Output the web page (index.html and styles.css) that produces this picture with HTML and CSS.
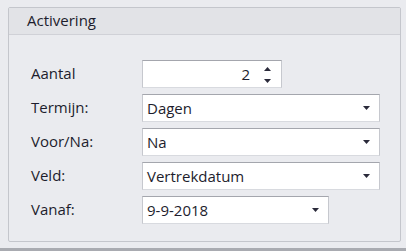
FILE: index.html
```html
<!DOCTYPE html>
<html lang="nl">
<head>
    <meta charset="UTF-8">
    <meta name="viewport" content="width=device-width, initial-scale=1.0">
    <title>Activering</title>
    <link rel="stylesheet" href="styles.css">
</head>
<body>
    <div class="group">
        <div class="group-header">Activering</div>
        <div class="group-body">
            <div class="row">
                <label class="label">Aantal</label>
                <div class="field spin">
                    <span class="value">2</span>
                    <span class="spin-buttons">
                        <svg width="7" height="4" viewBox="0 0 7 4"><path d="M0 4 L3.5 0 L7 4 Z" fill="#2a2a3a"/></svg>
                        <svg width="7" height="4" viewBox="0 0 7 4"><path d="M0 0 L7 0 L3.5 4 Z" fill="#2a2a3a"/></svg>
                    </span>
                </div>
            </div>
            <div class="row">
                <label class="label">Termijn:</label>
                <div class="field combo">
                    <span class="value">Dagen</span>
                    <svg class="arrow" width="7" height="4" viewBox="0 0 7 4"><path d="M0 0 L7 0 L3.5 4 Z" fill="#2a2a3a"/></svg>
                </div>
            </div>
            <div class="row">
                <label class="label">Voor/Na:</label>
                <div class="field combo">
                    <span class="value">Na</span>
                    <svg class="arrow" width="7" height="4" viewBox="0 0 7 4"><path d="M0 0 L7 0 L3.5 4 Z" fill="#2a2a3a"/></svg>
                </div>
            </div>
            <div class="row">
                <label class="label">Veld:</label>
                <div class="field combo">
                    <span class="value">Vertrekdatum</span>
                    <svg class="arrow" width="7" height="4" viewBox="0 0 7 4"><path d="M0 0 L7 0 L3.5 4 Z" fill="#2a2a3a"/></svg>
                </div>
            </div>
            <div class="row">
                <label class="label">Vanaf:</label>
                <div class="field combo date">
                    <span class="value">9-9-2018</span>
                    <svg class="arrow" width="7" height="4" viewBox="0 0 7 4"><path d="M0 0 L7 0 L3.5 4 Z" fill="#2a2a3a"/></svg>
                </div>
            </div>
        </div>
    </div>
    <div class="bottom-bar"></div>
</body>
</html>
```

FILE: styles.css
```css
body {
    margin: 0;
    background-color: #eaebef;
    font-family: "Open Sans", "Noto Sans", sans-serif;
    font-size: 15px;
    color: #1d1d2d;
    width: 406px;
    height: 251px;
    overflow: hidden;
}
.group {
    margin: 7px 5px 0 8px;
    border: 1px solid #c4c6cc;
    border-radius: 2px;
}
.group-header {
    height: 26px;
    line-height: 25px;
    padding-left: 18px;
    background-color: #e2e3e7;
    border-bottom: 1px solid #d0d1d7;
}
.group-body {
    padding: 25px 0 17px 22px;
    display: flex;
    flex-direction: column;
    gap: 6px;
}
.row {
    display: flex;
    align-items: center;
    height: 28px;
}
.label {
    width: 111px;
    margin-top: -2px;
}
.field {
    box-sizing: border-box;
    height: 28px;
    background-color: #ffffff;
    border: 1px solid;
    border-color: #a4a6ad #c6c8ce #d8dadf #c6c8ce;
    display: flex;
    align-items: center;
}
.spin {
    width: 140px;
    justify-content: flex-end;
}
.spin .value {
    margin-right: 14px;
}
.spin-buttons {
    display: flex;
    flex-direction: column;
    gap: 8px;
    margin-right: 10px;
    margin-top: 1px;
}
.combo {
    width: 238px;
    padding: 0 9px 0 4px;
    justify-content: space-between;
}
.date {
    width: 187px;
}
.arrow {
    flex-shrink: 0;
}
.bottom-bar {
    margin-top: 6px;
    height: 3px;
    background-color: #a9abb1;
}
```
